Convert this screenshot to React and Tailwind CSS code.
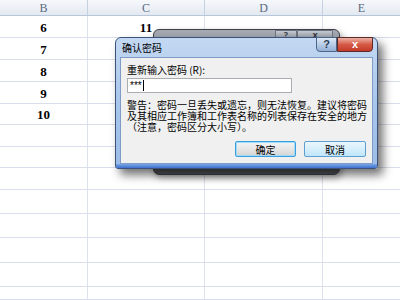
import React from "react";

const rows = [22, 22, 22, 22, 21, 22, 21, 22, 24, 24, 25, 24, 13];
const bVals = ["6", "7", "8", "9", "10"];
const cVals = ["11"];
const widths = [88, 117, 118, 77];

function Cell({ w, children, last }) {
  return (
    <div
      className={`flex items-center justify-center pt-[2px] ${last ? "" : "border-r border-[#dde1ee]"} text-[13px] font-bold text-black`}
      style={{ width: w, fontFamily: '"Liberation Serif", serif' }}
    >
      {children}
    </div>
  );
}

function Sheet() {
  return (
    <div className="flex flex-col">
      <div className="flex h-[16px] border-b border-[#b8c6da] bg-gradient-to-b from-[#f6f8fb] to-[#e3e9f2]">
        {["B", "C", "D", "E"].map((l, i) => (
          <div
            key={l}
            className={`flex items-center justify-center text-[12px] text-[#5a6a80] ${i < 3 ? "border-r border-[#c5d0e0]" : ""}`}
            style={{ width: widths[i], fontFamily: '"Liberation Serif", serif' }}
          >
            {l}
          </div>
        ))}
      </div>
      {rows.map((h, r) => (
        <div key={r} className="flex border-b border-[#dadeec]" style={{ height: h }}>
          <Cell w={widths[0]}>{bVals[r] || ""}</Cell>
          <Cell w={widths[1]}>{cVals[r] || ""}</Cell>
          <Cell w={widths[2]}></Cell>
          <Cell w={widths[3]} last></Cell>
        </div>
      ))}
    </div>
  );
}

export default function App() {
  return (
    <div className="relative w-[400px] h-[300px] overflow-hidden bg-white select-none">
      <Sheet />

      {/* window behind */}
      <div className="absolute left-[153px] top-[29px] w-[187px] h-[146px] flex flex-col rounded-[6px] border border-[#3e4148] bg-gradient-to-b from-[#a4a9b2] via-[#6c7078] to-[#54575e] shadow-[2px_3px_6px_rgba(0,0,0,0.35)]">
        <div className="flex justify-end pr-[6px]">
          <div className="w-[22px] h-[10px] rounded-bl-[3px] border border-[#6d737e] bg-gradient-to-b from-[#c4c9d1] to-[#8e949d] text-[9px] leading-[8px] text-center text-[#3c4048] font-bold">?</div>
          <div className="w-[36px] h-[10px] rounded-br-[3px] border border-[#6d737e] bg-gradient-to-b from-[#c4c9d1] to-[#8e949d] text-[9px] leading-[8px] text-center text-[#3c4048] font-bold">x</div>
        </div>
      </div>

      {/* main dialog */}
      <div
        className="absolute left-[115px] top-[37px] w-[263px] h-[132px] flex flex-col rounded-t-[6px] rounded-b-[3px] border border-[#3b5378] bg-gradient-to-b from-[#c3d8f2] via-[#a9c6ec] to-[#9cbde8] shadow-[5px_6px_10px_rgba(0,0,0,0.55)]"
        style={{ fontFamily: '"Noto Sans CJK SC", "Noto Sans", sans-serif' }}
      >
        {/* title bar */}
        <div className="flex h-[19px] items-start justify-between pl-[6px] pr-[4px]">
          <div className="pt-[2px] text-[10px] leading-[16px] text-black">确认密码</div>
          <div className="flex -mt-[1px]">
            <div className="w-[21px] h-[15px] rounded-bl-[4px] border border-[#4c6688] bg-gradient-to-b from-[#dce8f6] via-[#b9cde6] to-[#93b0d6] flex items-center justify-center text-[11px] font-bold text-[#2d3d55]" style={{ fontFamily: '"Liberation Sans", sans-serif' }}>?</div>
            <div className="w-[36px] h-[15px] rounded-br-[4px] border border-[#5a2b2b] bg-gradient-to-b from-[#eab0a4] via-[#d55a46] to-[#c23a28] flex items-center justify-center text-[11px] font-bold text-white" style={{ fontFamily: '"Liberation Sans", sans-serif' }}>x</div>
          </div>
        </div>

        {/* client area */}
        <div className="mx-[4px] h-[107px] flex flex-col border border-[#7e9cc6] bg-[#f0f0f0] px-[6px] pt-[6px]">
          <div className="text-[10px] leading-[12px] text-black">重新输入密码 (R):</div>
          <div className="mt-[2px] w-[165px] h-[15px] border border-[#abadb3] bg-white flex items-center pl-[2px] text-[10px] leading-[10px] text-black" style={{ fontFamily: '"Liberation Sans", sans-serif' }}>
            ***<span className="ml-[1px] inline-block w-[1px] h-[11px] bg-black"></span>
          </div>
          <div className="mt-[6px] w-[244px] text-[10px] leading-[11px] text-black">
            <div>警告：密码一旦丢失或遗忘，则无法恢复。建议将密码</div>
            <div>及其相应工作簿和工作表名称的列表保存在安全的地方</div>
            <div>（注意，密码区分大小写）。</div>
          </div>
          <div className="flex justify-end gap-[8px] mt-[9px]">
            <div className="w-[61px] h-[16px] rounded-[2px] border border-[#3c9fdd] bg-gradient-to-b from-[#f4f4f4] via-[#e6e6e6] to-[#d4d4d4] flex items-center justify-center text-[10px] text-black shadow-[inset_0_0_0_1px_#9fdcfb]">确定</div>
            <div className="w-[62px] h-[16px] rounded-[2px] border border-[#5f9fd0] bg-gradient-to-b from-[#eaf6fd] via-[#d7effc] to-[#bde5fa] flex items-center justify-center text-[10px] text-black">取消</div>
          </div>
        </div>
        {/* bottom frame glow */}
        <div className="mt-auto h-[4px] rounded-b-[2px] bg-gradient-to-b from-[#7aa6e6] to-[#3d6fcf]"></div>
      </div>
    </div>
  );
}
